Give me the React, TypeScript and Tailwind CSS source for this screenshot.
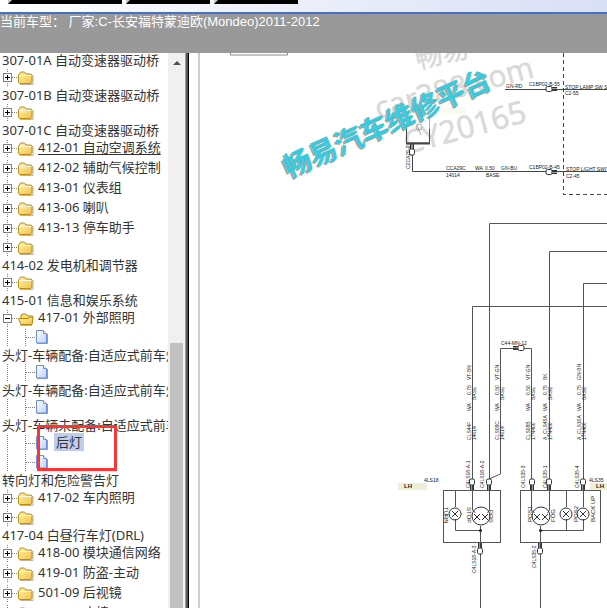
import React from 'react';

type Kind = 'closed' | 'open' | 'page';

interface TreeItem {
  label: string;
  kind: Kind;
  wrap?: boolean;
  underline?: boolean;
  selected?: boolean;
}

const items: TreeItem[] = [
  { label: '307-01A 自动变速器驱动桥', kind: 'closed', wrap: true },
  { label: '307-01B 自动变速器驱动桥', kind: 'closed', wrap: true },
  { label: '307-01C 自动变速器驱动桥', kind: 'closed', wrap: true },
  { label: '412-01 自动空调系统', kind: 'closed', underline: true },
  { label: '412-02 辅助气候控制', kind: 'closed' },
  { label: '413-01 仪表组', kind: 'closed' },
  { label: '413-06 喇叭', kind: 'closed' },
  { label: '413-13 停车助手', kind: 'closed' },
  { label: '414-02 发电机和调节器', kind: 'closed', wrap: true },
  { label: '415-01 信息和娱乐系统', kind: 'closed', wrap: true },
  { label: '417-01 外部照明', kind: 'open' },
  { label: '头灯-车辆配备:自适应式前车灯', kind: 'page', wrap: true },
  { label: '头灯-车辆配备:自适应式前车灯', kind: 'page', wrap: true },
  { label: '头灯-车辆未配备:自适应式前车灯', kind: 'page', wrap: true },
  { label: '后灯', kind: 'page', selected: true },
  { label: '转向灯和危险警告灯', kind: 'page', wrap: true },
  { label: '417-02 车内照明', kind: 'closed' },
  { label: '417-04 白昼行车灯(DRL)', kind: 'closed', wrap: true },
  { label: '418-00 模块通信网络', kind: 'closed' },
  { label: '419-01 防盗-主动', kind: 'closed' },
  { label: '501-09 后视镜', kind: 'closed' },
  { label: '501-10 座椅', kind: 'closed' },
];

// Join lines, expander box and folder/page icon of one node
const NodeIcon: React.FC<{ kind: Kind }> = ({ kind }) => {
  if (kind === 'page') {
    return (
      <svg width="50" height="18" viewBox="0 0 50 18" className="shrink-0" aria-hidden="true">
        <path d="M7.5 0v18M25.5 0v18M26 8.5h9" stroke="#808080" strokeDasharray="1 1" fill="none" />
        <path d="M37 14.5h10.5V5" stroke="#8e99bd" fill="none" />
        <path d="M36.5 1.5h7l3 3v9.5h-10z" fill="url(#sheet)" stroke="#6f8ed6" />
        <path d="M43.5 1.5v3h3" fill="#fff" stroke="#6f8ed6" />
      </svg>
    );
  }
  return (
    <svg width="34" height="18" viewBox="0 0 34 18" className="shrink-0" aria-hidden="true">
      <path d="M7.5 0v18M12 8.5h6" stroke="#808080" strokeDasharray="1 1" fill="none" />
      <rect x="3.5" y="4.5" width="8" height="8" fill="#fff" stroke="#808080" />
      <path d={kind === 'open' ? 'M5 8.5h5' : 'M5 8.5h5M7.5 6v5'} stroke="#000" />
      {kind === 'open' ? (
        <>
          <path d="M20 15.5h12" stroke="#b9b4a5" />
          <path d="M21 13V5l1-1h4l2 2h4.5v7z" fill="#f7e07a" stroke="#b5860d" />
          <path d="M18.5 8.5h10l1-1.5h3.5l-1 7.5H21z" fill="url(#folder)" stroke="#b5860d" />
        </>
      ) : (
        <>
          <path d="M20 15.5h13V6" stroke="#b9b4a5" fill="none" />
          <path d="M18.5 13V6l1-1 1-2h4l1.5 2h5l1 1V13l-1 1.5h-11.5z" fill="url(#folder)" stroke="#bd8d19" />
          <path d="M19 6.5h12.5" stroke="#fff9cd" />
        </>
      )}
    </svg>
  );
};

const TreeNode: React.FC<{ item: TreeItem }> = ({ item }) => {
  if (item.wrap) {
    return (
      <li>
        <div className="flex h-[18px]">
          <NodeIcon kind={item.kind} />
        </div>
        <a href="#" className="block h-[17px] pl-0.5 leading-[17px]">{item.label}</a>
      </li>
    );
  }
  return (
    <li className="relative flex h-5 items-center gap-1">
      <NodeIcon kind={item.kind} />
      <a
        href="#"
        className={
          item.selected
            ? 'mb-1 bg-[#bfcdea] px-0.5 leading-[18px]'
            : item.underline
              ? 'pb-1 leading-4 underline underline-offset-2'
              : 'pb-1 leading-4'
        }
      >
        {item.label}
      </a>
      {/* Highlight frame */}
      {item.selected && (
        <span className="pointer-events-none absolute -top-[9px] left-[37px] z-10 h-[46px] w-20 border-3 border-[#fb3434]"></span>
      )}
    </li>
  );
};

const Connector: React.FC<{ x: number; y: number; turn?: number }> = ({ x, y, turn = 0 }) => (
  <g transform={`translate(${x} ${y}) rotate(${turn})`} stroke="#333" fill="#fff">
    <rect x="-2.5" y="-4" width="5" height="6" rx="1.5" />
    <path d="M-1.5 2v5M1.5 2v5M-1.5 4h3M-1.5 6h3" fill="none" />
  </g>
);

const Lamp: React.FC<{ x: number; y: number; r: number }> = ({ x, y, r }) => (
  <g stroke="#333" fill="none">
    <circle cx={x} cy={y} r={r} />
    {r > 7 ? (
      <path d={`M${x - 7} ${y - 2}l6 6m0-6l-6 6M${x + 1} ${y - 2}l6 6m0-6l-6 6`} />
    ) : (
      <path d={`M${x - 3} ${y - 3}l6 6m0-6l-6 6`} />
    )}
  </g>
);

const wireTexts = [
  { x: 471, wire: 'CLS44F', code: '14014', size: '0.75', color: 'VT-BN' },
  { x: 499, wire: 'CLS08C', code: '14014', size: '0.50', color: 'VT-GN' },
  { x: 530, wire: 'CLS08B', code: '17N400', size: '0.50', color: 'VT-GN' },
  { x: 547, wire: 'A_CLS45A', code: '17N400', size: '0.75', color: 'BK' },
  { x: 581, wire: 'A_CLS10A', code: '17N400', size: '0.75', color: 'GN-BN' },
];

const verticalTexts = [
  { x: 470, y: 488, text: 'C4LS18-A-1' },
  { x: 484, y: 488, text: 'C4LS18-A-2' },
  { x: 525, y: 488, text: 'C4LS35-3' },
  { x: 547, y: 488, text: 'C4LS35-1' },
  { x: 579, y: 488, text: 'C4LS35-4' },
  { x: 476, y: 573, text: 'C4LS18-A-3' },
  { x: 536, y: 568, text: 'C4LS35-2' },
  { x: 410, y: 169, text: 'C2CA29-2' },
];

const connectors = [
  { x: 472, y: 483 },
  { x: 489, y: 483 },
  { x: 532, y: 483 },
  { x: 549, y: 483 },
  { x: 583, y: 483 },
];

const Diagram: React.FC = () => (
  <svg
    width="418"
    height="555"
    viewBox="189 53 418 555"
    className="shrink-0 font-['Liberation_Sans',sans-serif] text-[5px]"
    role="img"
    aria-label="后灯"
  >
    <path d="M199 53v555" stroke="#cfcfcf" strokeWidth="2" />
    <path d="M230.5 53v2h57v-2" stroke="#888" fill="none" />

    {/* Site watermark */}
    <g fill="#d9d9d9" stroke="#d9d9d9" strokeWidth="0.6" fontFamily="'Open Sans', 'Noto Sans CJK SC', sans-serif">
      <text transform="translate(418 69) rotate(-14)" fontSize="27">畅易</text>
      <text transform="translate(378 119) rotate(-15)" fontSize="30">car388.com</text>
      <text transform="translate(407 154) rotate(-15)" fontSize="31">CY20165</text>
    </g>
    <path d="M442 107h24v7h-24z" fill="#fafaf0" />

    {/* Upper wires */}
    <g stroke="#444" fill="none">
      <path d="M505 89.5h102M412.5 152v19.5H607M406.5 129v14h23v-14" />
      <path d="M406 143.5h24" strokeWidth="2" />
      <path d="M406.5 115v14M429.5 115v14M417 125l4 10" stroke="#aaa" />
      <circle cx="419" cy="127" r="3" stroke="#aaa" />
      <path d="M563.5 53v141.5H607" strokeDasharray="4 3" />
    </g>
    <Connector x={412} y={151} turn={180} />
    <Connector x={550} y={89} turn={-90} />
    <Connector x={550} y={172} turn={-90} />
    <g fill="#222">
      <text x="506" y="88">GN-RD</text>
      <text x="529" y="86">C1BP02-B-55</text>
      <text x="529" y="169">C1BP02-B-45</text>
      <text x="565" y="89">STOP LAMP SW SL</text>
      <text x="565" y="95">C2-55</text>
      <text x="566" y="171">STOP LIGHT SWIT</text>
      <text x="566" y="178">C2-45</text>
      <text x="446" y="170">CCA29C</text>
      <text x="446" y="177">14014</text>
      <text x="475" y="170">WA</text>
      <text x="485" y="170">0.50</text>
      <text x="486" y="177">BASE</text>
      <text x="501" y="170">GN-BU</text>
    </g>
    <g
      transform="translate(289 178) rotate(-24)"
      fontFamily="'Noto Sans CJK SC', sans-serif"
      fontSize="28"
      fontWeight="700"
    >
      <text x="-2" y="1" fill="#a8a29c">畅易汽车维修平台</text>
      <text fill="#35cbe0">畅易汽车维修平台</text>
    </g>

    {/* Lower wires */}
    <g stroke="#555" fill="none">
      <path d="M607 223.5H489.5V510l-2 3M607 251.5H549.5V510l-2 3M607 283.5H583.5V507M607 306.5H472.5V510l3 3" />
      <path d="M489 479l11.5-5V348.5h31V510l3 3" />
      <rect x="443.5" y="490.5" width="57" height="52" />
      <rect x="520.5" y="490.5" width="80" height="52" />
      <path d="M455.5 491v16M455.5 519v11.5h25M480.5 526v82M540.5 526v82M540.5 530.5h43V519M566.5 491v16M566.5 519v11" />
    </g>
    <circle cx="480.5" cy="530.5" r="1.5" fill="#222" />
    <circle cx="540.5" cy="530.5" r="1.5" fill="#222" />
    {connectors.map((c) => (
      <Connector key={c.x} x={c.x} y={c.y} />
    ))}
    <Connector x={480} y={550} turn={180} />
    <Connector x={540} y={550} turn={180} />
    <Connector x={520} y={348} turn={90} />
    <Lamp x={455} y={514} r={6} />
    <Lamp x={481} y={516} r={9} />
    <Lamp x={541} y={516} r={9} />
    <Lamp x={566} y={514} r={6} />
    <Lamp x={583} y={514} r={6} />

    <path d="M398 483h29v7h-29zM590 483h17v7h-17z" fill="#efeed6" />
    <g fill="#222">
      <g fontSize="6">
        <text x="404" y="488" fontWeight="700">LH</text>
        <text x="596" y="488" fontWeight="700">LH</text>
      </g>
      <text x="424" y="482">4LS18</text>
      <text x="589" y="482">4LS35</text>
      <text x="501" y="345">C44-MN-12</text>
      {wireTexts.map((w) => (
        <g key={w.x}>
          <text transform={`translate(${w.x} 440) rotate(-90)`}>{w.wire}</text>
          <text transform={`translate(${w.x + 5} 440) rotate(-90)`}>{w.code}</text>
          <text transform={`translate(${w.x} 411) rotate(-90)`}>WA</text>
          <text transform={`translate(${w.x} 395) rotate(-90)`}>{w.size}</text>
          <text transform={`translate(${w.x + 5} 400) rotate(-90)`}>BASE</text>
          <text transform={`translate(${w.x} 380) rotate(-90)`}>{w.color}</text>
        </g>
      ))}
      {verticalTexts.map((t) => (
        <text key={t.text} transform={`translate(${t.x} ${t.y}) rotate(-90)`}>{t.text}</text>
      ))}
      <g fontSize="6">
        <text transform="translate(444 507) rotate(90)">TURN</text>
        <text transform="translate(467 507) rotate(90)">STOP</text>
        <text transform="translate(489 510) rotate(90)">POS</text>
        <text transform="translate(532 522) rotate(-90)">POS1</text>
        <text transform="translate(555 522) rotate(-90)">FOG</text>
        <text transform="translate(578 522) rotate(-90)">POS2</text>
        <text transform="translate(595 522) rotate(-90)">BACK UP</text>
      </g>
    </g>
  </svg>
);

const TopTab: React.FC<{ className: string }> = ({ className }) => (
  <div className={`h-1 bg-black ${className}`}>
    <svg width="4" height="4" viewBox="0 0 4 4" aria-hidden="true">
      <path d="M0 0h4L0 4z" fill="#c8c8c8" />
    </svg>
  </div>
);

const App: React.FC = () => {
  return (
    <div className="flex h-screen flex-col overflow-hidden bg-white">
      {/* Gradients shared by the tree icons */}
      <svg width="0" height="0" className="absolute" aria-hidden="true">
        <defs>
          <linearGradient id="folder" x1="0" y1="0" x2="1" y2="1">
            <stop offset="0" stopColor="#fff5a8" />
            <stop offset="1" stopColor="#f3c14b" />
          </linearGradient>
          <linearGradient id="sheet" x1="0" y1="0" x2="1" y2="1">
            <stop offset="0" stopColor="#ffffff" />
            <stop offset="1" stopColor="#b9d2f7" />
          </linearGradient>
        </defs>
      </svg>

      <div className="flex h-3 shrink-0 gap-1 bg-linear-to-r from-white to-[#d9dff5] pl-2">
        <TopTab className="w-[114px]" />
        <TopTab className="w-[84px]" />
        <TopTab className="w-[84px]" />
      </div>
      <header className="h-[41px] shrink-0 border-t-2 border-[#4470cc] bg-[#999] font-['Liberation_Sans','Noto_Sans_CJK_SC',sans-serif] text-[13px] leading-4 whitespace-pre text-white">
        当前车型： 厂家:C-长安福特蒙迪欧(Mondeo)2011-2012
      </header>

      <div className="flex min-h-0 flex-1">
        <nav className="w-[168px] shrink-0 overflow-hidden font-['Noto_Sans','Noto_Sans_CJK_SC',sans-serif] text-[13px] whitespace-nowrap text-[#333]">
          <ul className="-mt-[19px]">
            {items.map((item, index) => (
              <TreeNode key={index} item={item} />
            ))}
          </ul>
        </nav>

        {/* Scrollbar */}
        <div className="flex w-[17px] shrink-0 flex-col items-center bg-[#f0f0f0] pt-2">
          <svg width="8" height="4" viewBox="0 0 8 4" aria-hidden="true">
            <path d="M4 0l4 4H0z" fill="#505050" />
          </svg>
          <div className="mt-[278px] w-[13px] flex-1 bg-[#c1c1c1]"></div>
        </div>
        <div className="w-1 shrink-0 border-r border-l border-r-black border-l-[#a0a0a0] bg-[#555]"></div>

        <main className="flex min-w-0 flex-1 overflow-hidden">
          <Diagram />
        </main>
      </div>
    </div>
  );
};

export default App;
